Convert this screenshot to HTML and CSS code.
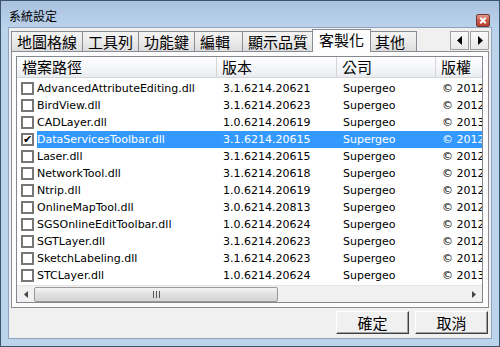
FILE: index.html
```html
<!DOCTYPE html>
<html lang="zh-Hant">
<head>
    <meta charset="UTF-8">
    <title>系統設定</title>
    <link rel="stylesheet" href="styles.css">
</head>
<body>
    <div class="window">
        <div class="titlebar">
            <span class="title">系統設定</span>
            <span class="close">
                <svg width="13" height="11" viewBox="0 0 13 11"><path d="M3.5 2.5 L9.5 8.5 M9.5 2.5 L3.5 8.5" stroke="#fff" stroke-width="2.2"/></svg>
            </span>
        </div>
        <div class="client">
            <div class="tabbar">
                <div class="tab">地圖格線</div>
                <div class="tab">工具列</div>
                <div class="tab">功能鍵</div>
                <div class="tab">編輯</div>
                <div class="tab">顯示品質</div>
                <div class="tab active">客製化</div>
                <div class="tab last">其他</div>
                <div class="spin">
                    <span class="spin-btn"><svg width="6" height="9" viewBox="0 0 6 9"><path d="M5 0 L0 4.5 L5 9 Z" fill="#000"/></svg></span>
                    <span class="spin-btn"><svg width="6" height="9" viewBox="0 0 6 9"><path d="M1 0 L6 4.5 L1 9 Z" fill="#000"/></svg></span>
                </div>
            </div>
            <div class="panel">
                <div class="list">
                    <div class="header">
                        <div class="col c1">檔案路徑</div>
                        <div class="col c2">版本</div>
                        <div class="col c3">公司</div>
                        <div class="col c4">版權</div>
                    </div>
                    <div class="rows">
                        <div class="row"><div class="c1"><span class="check"></span>AdvancedAttributeEditing.dll</div><div class="c2">3.1.6214.20621</div><div class="c3">Supergeo</div><div class="c4">© 2012</div></div>
                        <div class="row"><div class="c1"><span class="check"></span>BirdView.dll</div><div class="c2">3.1.6214.20623</div><div class="c3">Supergeo</div><div class="c4">© 2012</div></div>
                        <div class="row"><div class="c1"><span class="check"></span>CADLayer.dll</div><div class="c2">1.0.6214.20619</div><div class="c3">Supergeo</div><div class="c4">© 2013</div></div>
                        <div class="row selected"><div class="c1"><span class="check on">✔</span><span class="sel">DataServicesToolbar.dll</span></div><div class="c2">3.1.6214.20615</div><div class="c3">Supergeo</div><div class="c4">© 2012</div></div>
                        <div class="row"><div class="c1"><span class="check"></span>Laser.dll</div><div class="c2">3.1.6214.20615</div><div class="c3">Supergeo</div><div class="c4">© 2012</div></div>
                        <div class="row"><div class="c1"><span class="check"></span>NetworkTool.dll</div><div class="c2">3.1.6214.20618</div><div class="c3">Supergeo</div><div class="c4">© 2012</div></div>
                        <div class="row"><div class="c1"><span class="check"></span>Ntrip.dll</div><div class="c2">1.0.6214.20619</div><div class="c3">Supergeo</div><div class="c4">© 2012</div></div>
                        <div class="row"><div class="c1"><span class="check"></span>OnlineMapTool.dll</div><div class="c2">3.0.6214.20813</div><div class="c3">Supergeo</div><div class="c4">© 2012</div></div>
                        <div class="row"><div class="c1"><span class="check"></span>SGSOnlineEditToolbar.dll</div><div class="c2">1.0.6214.20624</div><div class="c3">Supergeo</div><div class="c4">© 2012</div></div>
                        <div class="row"><div class="c1"><span class="check"></span>SGTLayer.dll</div><div class="c2">3.1.6214.20623</div><div class="c3">Supergeo</div><div class="c4">© 2012</div></div>
                        <div class="row"><div class="c1"><span class="check"></span>SketchLabeling.dll</div><div class="c2">3.1.6214.20623</div><div class="c3">Supergeo</div><div class="c4">© 2012</div></div>
                        <div class="row"><div class="c1"><span class="check"></span>STCLayer.dll</div><div class="c2">1.0.6214.20624</div><div class="c3">Supergeo</div><div class="c4">© 2013</div></div>
                    </div>
                    <div class="hscroll">
                        <span class="arrow"><svg width="4" height="7" viewBox="0 0 4 7"><path d="M4 0 L0 3.5 L4 7 Z" fill="#444"/></svg></span>
                        <div class="track">
                            <div class="thumb"><span class="grip"></span></div>
                        </div>
                        <span class="arrow"><svg width="4" height="7" viewBox="0 0 4 7"><path d="M0 0 L4 3.5 L0 7 Z" fill="#444"/></svg></span>
                    </div>
                </div>
            </div>
            <div class="buttons">
                <button class="btn">確定</button>
                <button class="btn">取消</button>
            </div>
        </div>
    </div>
</body>
</html>
```
FILE: styles.css
```css
* {
    margin: 0;
    padding: 0;
    box-sizing: border-box;
}
body {
    width: 500px;
    height: 347px;
    overflow: hidden;
    font-family: "DejaVu Sans", "Noto Sans CJK TC", sans-serif;
    font-size: 11px;
    color: #000;
}
.window {
    width: 500px;
    height: 347px;
    border: 1px solid #3d5370;
    background: linear-gradient(#aac2df, #bcd3ec 28px, #bcd3ec);
    padding: 0 7px 7px 7px;
    display: flex;
    flex-direction: column;
}
.titlebar {
    height: 26px;
    display: flex;
    align-items: center;
    justify-content: space-between;
    padding-top: 2px;
}
.title {
    font-family: "Noto Sans CJK TC", sans-serif;
    font-size: 12px;
    margin-left: 1px;
}
.close {
    width: 14px;
    height: 13px;
    margin-right: 2px;
    margin-top: 10px;
    border: 1px solid #6e3a33;
    border-radius: 2px;
    background: linear-gradient(#e09a8d, #c8584a 50%, #b6402f);
    display: flex;
    align-items: center;
    justify-content: center;
}
.client {
    flex: 1;
    background: #f0f0f0;
    border: 1px solid #8ea3bd;
    display: flex;
    flex-direction: column;
    padding: 1px 2px 0 2px;
}
.tabbar {
    height: 22px;
    display: flex;
    align-items: flex-end;
    position: relative;
    z-index: 1;
}
.tab {
    height: 20px;
    min-width: 48px;
    padding: 0 5px;
    font-family: "Noto Sans CJK TC", sans-serif;
    font-size: 15px;
    line-height: 19px;
    border: 1px solid #898c95;
    border-bottom: none;
    border-right: none;
    background: linear-gradient(#f3f3f3, #ebebeb 50%, #dddddd);
}
.tab.last {
    border-right: 1px solid #898c95;
}
.tab.active {
    height: 23px;
    background: #fcfcfc;
    margin-bottom: -1px;
    padding: 0 6px;
    margin-left: -1px;
    margin-right: -2px;
    line-height: 20px;
    border-right: 1px solid #898c95;
    position: relative;
}
.spin {
    margin-left: auto;
    display: flex;
    gap: 1px;
    margin-bottom: 1px;
}
.spin-btn {
    width: 19px;
    height: 19px;
    border: 1px solid #a0a0a0;
    background: linear-gradient(#fafafa, #e8e8e8);
    display: flex;
    align-items: center;
    justify-content: center;
}
.panel {
    height: 257px;
    border: 1px solid #898c95;
    background: #fcfcfc;
    padding: 4px 5px 4px 4px;
}
.list {
    height: 100%;
    border: 1px solid #828790;
    background: #fff;
    display: flex;
    flex-direction: column;
    overflow: hidden;
}
.header {
    height: 21px;
    display: flex;
    background: linear-gradient(#ffffff, #f6f7f9 50%, #e9ecf0);
    border-bottom: 1px solid #d5d5d5;
    font-family: "Noto Sans CJK TC", sans-serif;
    font-size: 15px;
    line-height: 19px;
}
.header .col {
    padding-left: 5px;
    border-right: 1px solid #d5d5d5;
    white-space: nowrap;
    overflow: hidden;
}
.c1 {
    width: 200px;
    flex: none;
}
.c2 {
    width: 120px;
    flex: none;
}
.c3 {
    width: 99px;
    flex: none;
}
.c4 {
    width: 60px;
    flex: none;
}
.rows {
    flex: 1;
    padding-top: 2px;
}
.row {
    height: 17px;
    display: flex;
    align-items: center;
    white-space: nowrap;
    line-height: 17px;
}
.row > div {
    overflow: hidden;
}
.row .c1 {
    padding-left: 4px;
    display: flex;
    align-items: center;
}
.row .c2,
.row .c3,
.row .c4 {
    padding-left: 6px;
}
.check {
    width: 13px;
    height: 13px;
    border: 2px solid #777;
    margin-right: 3px;
    flex: none;
    font-size: 11px;
    line-height: 9px;
    text-align: center;
    color: #000;
}
.row.selected {
    background: #3399ff;
    color: #fff;
}
.row.selected .c1 {
    background: linear-gradient(to right, #fff 20px, transparent 20px);
}
.hscroll {
    height: 17px;
    display: flex;
    align-items: center;
    background: #f0f0f0;
    border-top: 1px solid #e6e6e6;
}
.arrow {
    width: 17px;
    height: 17px;
    display: flex;
    align-items: center;
    justify-content: center;
    flex: none;
}
.track {
    flex: 1;
    height: 17px;
    padding: 1px 0;
}
.thumb {
    width: 244px;
    height: 15px;
    border: 1px solid #9a9a9a;
    border-radius: 2px;
    background: linear-gradient(#f4f4f4, #e0e0e0 50%, #d4d4d4);
    display: flex;
    align-items: center;
    justify-content: center;
}
.grip {
    width: 7px;
    height: 7px;
    background: repeating-linear-gradient(to right, #555 0 1px, transparent 1px 3px);
}
.buttons {
    flex: 1;
    display: flex;
    justify-content: flex-end;
    align-items: flex-start;
    gap: 6px;
    padding: 3px 1px 0 0;
}
.btn {
    width: 73px;
    height: 23px;
    font-family: "Noto Sans CJK TC", sans-serif;
    font-size: 15px;
    line-height: 19px;
    background: #f0f0f0;
    border: 1px solid #fff;
    border-right-color: #404040;
    border-bottom-color: #404040;
    box-shadow: inset -1px -1px 0 #a0a0a0;
    color: #000;
}
```
